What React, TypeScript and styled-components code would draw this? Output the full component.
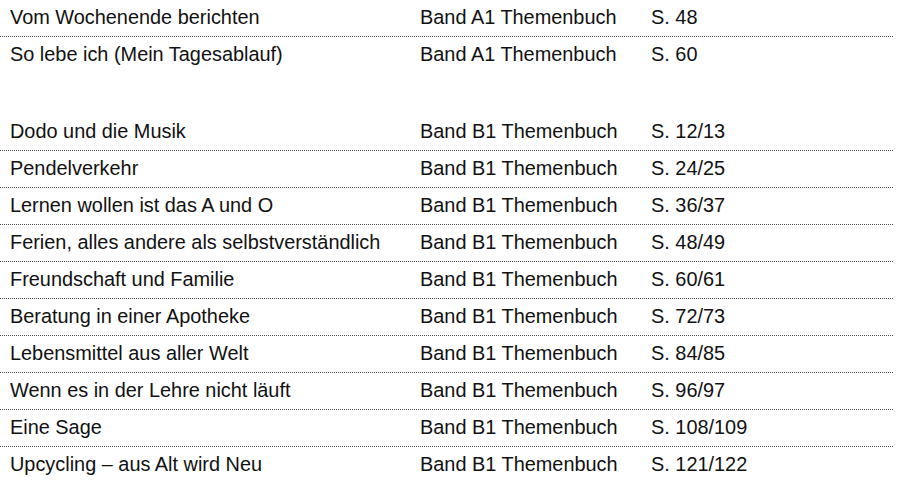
import styled, { createGlobalStyle } from 'styled-components';

const GlobalStyle = createGlobalStyle`
  html, body {
    margin: 0;
    padding: 0;
    background: #ffffff;
  }
  body {
    font-family: 'Liberation Sans', Arial, sans-serif;
    color: #111111;
  }
`;

const Table = styled.div`
  width: 893px;
  display: flex;
  flex-direction: column;
`;

const Section = styled.div`
  display: flex;
  flex-direction: column;
`;

const Spacer = styled.div`
  height: 40px;
`;

const Row = styled.div<{ $last?: boolean }>`
  display: grid;
  grid-template-columns: 410px 231px 1fr;
  align-items: center;
  height: 37px;
  box-sizing: border-box;
  padding-left: 10px;
  border-bottom: 1px dotted ${(p) => (p.$last ? 'transparent' : '#4a4a4a')};
  font-size: 19.9px;
  line-height: 1;
`;

const Cell = styled.span`
  white-space: nowrap;
`;

interface IEntry {
  title: string;
  band: string;
  page: string;
}

const sectionA: IEntry[] = [
  { title: 'Vom Wochenende berichten', band: 'Band A1 Themenbuch', page: 'S. 48' },
  { title: 'So lebe ich (Mein Tagesablauf)', band: 'Band A1 Themenbuch', page: 'S. 60' },
];

const sectionB: IEntry[] = [
  { title: 'Dodo und die Musik', band: 'Band B1 Themenbuch', page: 'S. 12/13' },
  { title: 'Pendelverkehr', band: 'Band B1 Themenbuch', page: 'S. 24/25' },
  { title: 'Lernen wollen ist das A und O', band: 'Band B1 Themenbuch', page: 'S. 36/37' },
  { title: 'Ferien, alles andere als selbstverständlich', band: 'Band B1 Themenbuch', page: 'S. 48/49' },
  { title: 'Freundschaft und Familie', band: 'Band B1 Themenbuch', page: 'S. 60/61' },
  { title: 'Beratung in einer Apotheke', band: 'Band B1 Themenbuch', page: 'S. 72/73' },
  { title: 'Lebensmittel aus aller Welt', band: 'Band B1 Themenbuch', page: 'S. 84/85' },
  { title: 'Wenn es in der Lehre nicht läuft', band: 'Band B1 Themenbuch', page: 'S. 96/97' },
  { title: 'Eine Sage', band: 'Band B1 Themenbuch', page: 'S. 108/109' },
  { title: 'Upcycling – aus Alt wird Neu', band: 'Band B1 Themenbuch', page: 'S. 121/122' },
];

const EntryList = ({ entries }: { entries: IEntry[] }) => (
  <Section>
    {entries.map((e, i) => (
      <Row key={e.title} $last={i === entries.length - 1}>
        <Cell>{e.title}</Cell>
        <Cell>{e.band}</Cell>
        <Cell>{e.page}</Cell>
      </Row>
    ))}
  </Section>
);

export default function App() {
  return (
    <>
      <GlobalStyle />
      <Table>
        <EntryList entries={sectionA} />
        <Spacer />
        <EntryList entries={sectionB} />
      </Table>
    </>
  );
}
